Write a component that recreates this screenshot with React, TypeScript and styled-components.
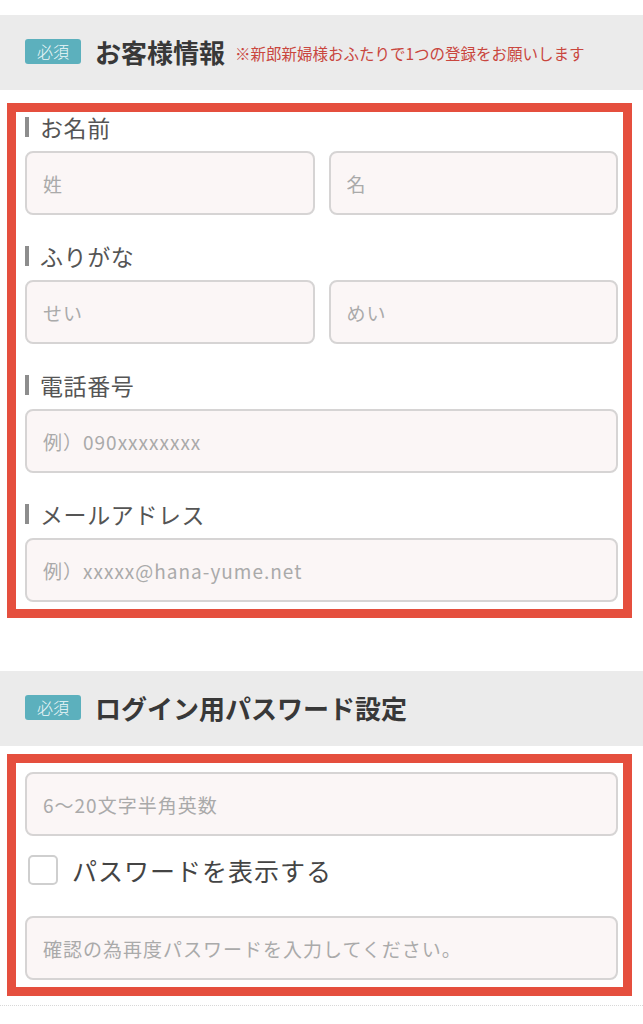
import styled, { createGlobalStyle } from 'styled-components';

const GlobalStyle = createGlobalStyle`
  html, body {
    margin: 0;
    padding: 0;
    background: #ffffff;
  }

  body {
    font-family: "Noto Sans CJK JP", "Noto Sans", sans-serif;
    color: #444444;
  }
`;

type TextField = {
  placeholder: string;
};

type FieldDef = {
  label: string;
  inputs: TextField[];
};

const customerFields: FieldDef[] = [
  { label: 'お名前', inputs: [{ placeholder: '姓' }, { placeholder: '名' }] },
  { label: 'ふりがな', inputs: [{ placeholder: 'せい' }, { placeholder: 'めい' }] },
  { label: '電話番号', inputs: [{ placeholder: '例）090xxxxxxxx' }] },
  { label: 'メールアドレス', inputs: [{ placeholder: '例）xxxxx@hana-yume.net' }] },
];

const App = () => {
  return (
    <Page>
      <GlobalStyle />

      <SectionHeader $offset={15}>
        <Badge>必須</Badge>
        <Title>お客様情報</Title>
        <Note>※新郎新婦様おふたりで1つの登録をお願いします</Note>
      </SectionHeader>

      <FormBox $offset={13}>
        {customerFields.map((field) => (
          <Field key={field.label}>
            <Label>{field.label}</Label>
            <InputRow $columns={field.inputs.length}>
              {field.inputs.map((input) => (
                <Input key={input.placeholder} type="text" placeholder={input.placeholder} />
              ))}
            </InputRow>
          </Field>
        ))}
      </FormBox>

      <SectionHeader $offset={53}>
        <Badge>必須</Badge>
        <Title>ログイン用パスワード設定</Title>
      </SectionHeader>

      <FormBox $offset={8} $top={9}>
        <Input type="password" placeholder="6〜20文字半角英数" />
        <CheckRow>
          <Checkbox type="checkbox" />
          <CheckLabel>パスワードを表示する</CheckLabel>
        </CheckRow>
        <Input type="password" placeholder="確認の為再度パスワードを入力してください。" />
      </FormBox>

      <Divider />
    </Page>
  );
};

const Page = styled.div`
  width: 643px;
  min-height: 1024px;
  overflow: hidden;
  display: flex;
  flex-direction: column;
`;

const SectionHeader = styled.div<{ $offset: number }>`
  margin-top: ${(p) => p.$offset}px;
  height: 75px;
  background-color: #ebebeb;

  display: flex;
  align-items: center;
  padding-left: 25px;
  padding-bottom: 2px;
  box-sizing: border-box;
`;

const Badge = styled.span`
  width: 56px;
  height: 25px;
  border-radius: 3px;
  background-color: #5cb0bd;
  color: #eef8fa;
  font-size: 16px;
  font-weight: 300;
  line-height: 25px;
  text-align: center;
  flex-shrink: 0;
`;

const Title = styled.h2`
  margin: 0 0 0 14px;
  font-size: 26px;
  font-weight: 700;
  color: #383838;
  white-space: nowrap;
`;

const Note = styled.span`
  margin-left: 10px;
  padding-top: 2px;
  font-size: 15.5px;
  color: #c9463e;
  white-space: nowrap;
`;

const FormBox = styled.div<{ $offset: number; $top?: number }>`
  margin: ${(p) => p.$offset}px 11px 0 7px;
  border: 9px solid #e54f3e;
  padding: ${(p) => p.$top ?? 0}px 5px 7px 9px;

  display: flex;
  flex-direction: column;
`;

const Field = styled.div`
  display: flex;
  flex-direction: column;

  & + & {
    margin-top: 26px;
  }
`;

const Label = styled.div`
  height: 30px;
  margin-bottom: 9px;
  display: flex;
  align-items: center;
  font-size: 23px;
  letter-spacing: 0.6px;
  color: #555555;

  &::before {
    content: '';
    width: 4px;
    height: 20px;
    margin-right: 11px;
    background-color: #8d8d8d;
  }
`;

const InputRow = styled.div<{ $columns: number }>`
  display: grid;
  grid-template-columns: repeat(${(p) => p.$columns}, 1fr);
  gap: 14px;
`;

const Input = styled.input`
  width: 100%;
  height: 64px;
  box-sizing: border-box;
  margin: 0;
  padding: 0 0 0 16px;
  border: 2px solid #d6d4d4;
  border-radius: 8px;
  background-color: #fbf6f6;
  font-family: "Noto Sans CJK JP", "Noto Sans", sans-serif;
  font-size: 19px;
  letter-spacing: 1px;
  color: #444444;
  outline: none;

  &::placeholder {
    color: #aaaaaa;
  }
`;

const CheckRow = styled.label`
  display: flex;
  align-items: center;
  margin: 19px 0 31px 3px;
  height: 30px;
`;

const Checkbox = styled.input`
  appearance: none;
  width: 30px;
  height: 30px;
  margin: 0;
  box-sizing: border-box;
  border: 2px solid #cfcfcf;
  border-radius: 5px;
  background-color: #ffffff;
`;

const CheckLabel = styled.span`
  margin-left: 14px;
  font-size: 25px;
  letter-spacing: 1px;
  color: #444444;
`;

const Divider = styled.div`
  margin-top: 9px;
  border-top: 1px dotted #d8d8d8;
`;

export default App;
